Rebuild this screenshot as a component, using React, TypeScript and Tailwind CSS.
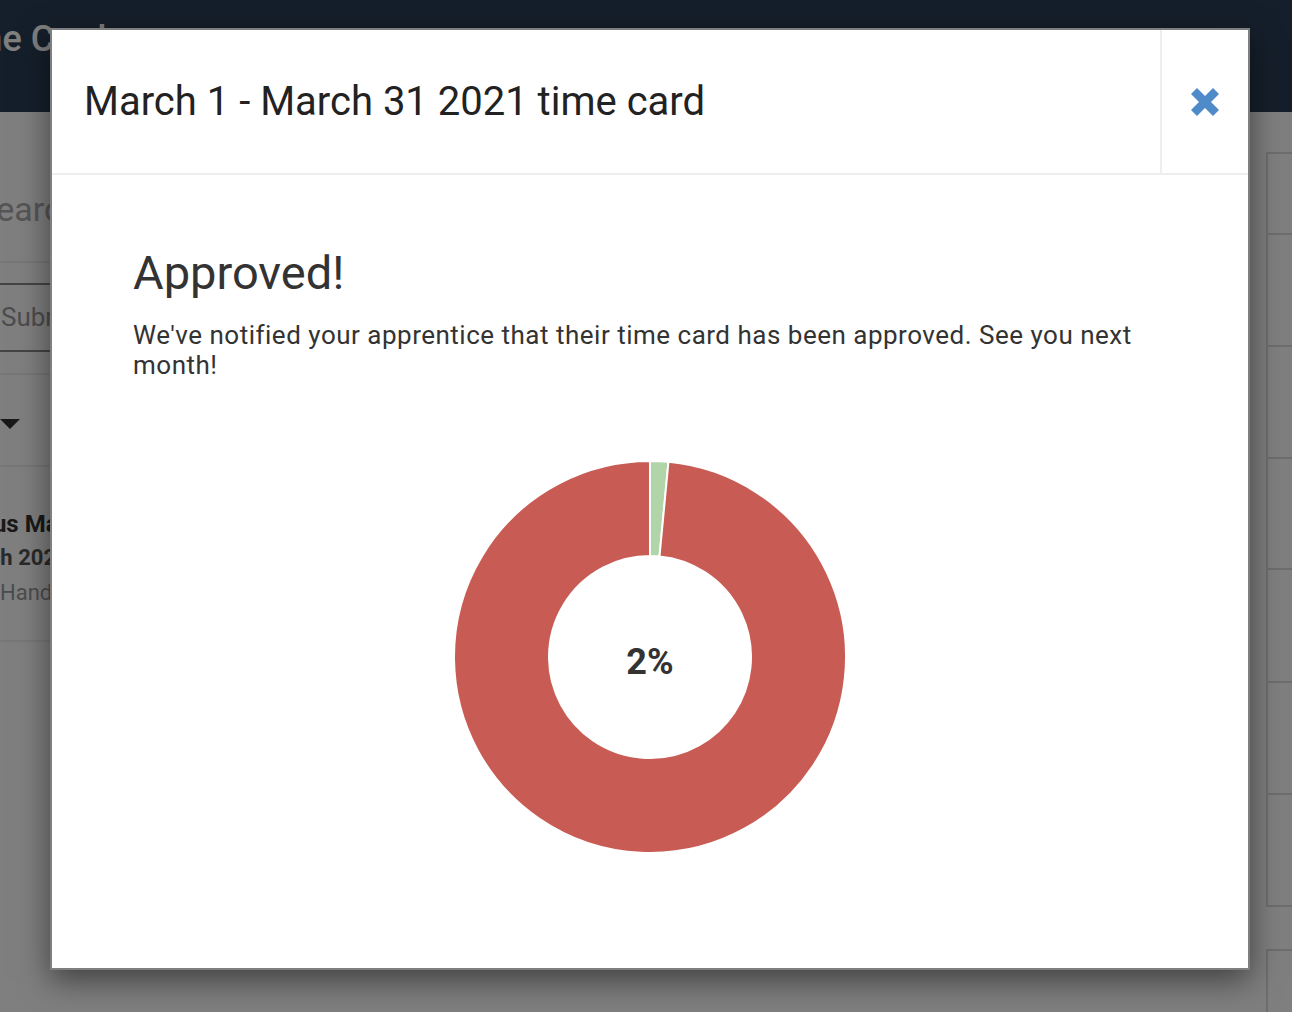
import React from 'react';

const font = { fontFamily: 'Roboto, "Noto Sans", sans-serif' };

function arcPath(cx: number, cy: number, rO: number, rI: number, a0: number, a1: number) {
  const pt = (r: number, a: number) => {
    const rad = ((a - 90) * Math.PI) / 180;
    return `${cx + r * Math.cos(rad)} ${cy + r * Math.sin(rad)}`;
  };
  const large = a1 - a0 > 180 ? 1 : 0;
  return `M ${pt(rO, a0)} A ${rO} ${rO} 0 ${large} 1 ${pt(rO, a1)} L ${pt(rI, a1)} A ${rI} ${rI} 0 ${large} 0 ${pt(rI, a0)} Z`;
}

function Donut({ percent }: { percent: number }) {
  const split = (percent / 100) * 360;
  return (
    <div className="relative w-[394px] h-[394px]">
      <svg width="394" height="394" viewBox="0 0 394 394">
        <path d={arcPath(197, 197, 196, 101, 0, split)} fill="#b1d4a8" stroke="#fff" strokeWidth="2" />
        <path d={arcPath(197, 197, 196, 101, split, 359.99)} fill="#c85b53" stroke="#fff" strokeWidth="2" />
      </svg>
      <div className="absolute inset-0 flex items-center justify-center pt-[10px]">
        <span className="text-[36px] font-bold text-[#333]">2%</span>
      </div>
    </div>
  );
}

function BackgroundPage() {
  const rows = [81, 112, 112, 111, 113, 112, 112];
  return (
    <div className="w-full h-full flex flex-col bg-white" style={font}>
      <div className="h-[112px] shrink-0 bg-[#2a3e56] flex items-start overflow-hidden">
        <span className="-ml-[60px] mt-[12px] text-[36px] font-medium text-white whitespace-nowrap">Time Cards</span>
      </div>
      <div className="flex flex-1 min-h-0">
        <div className="w-[300px] flex flex-col">
          <div className="h-[151px] shrink-0 border-b-2 border-[#eee] flex items-start pt-[72px] overflow-hidden">
            <span className="-ml-[24px] text-[34px] text-[#aaa] whitespace-nowrap">Search</span>
          </div>
          <div className="h-[112px] shrink-0 border-b-2 border-[#eee] flex flex-col pt-[20px]">
            <div className="h-[69px] border-y-2 border-[#888] flex items-center">
              <span className="text-[26px] text-[#999] pl-[1px]">Submitted</span>
            </div>
          </div>
          <div className="h-[92px] shrink-0 border-b-2 border-[#eee] flex items-center pt-[8px]">
            <div className="w-0 h-0 border-l-[10px] border-r-[10px] border-t-[10px] border-l-transparent border-r-transparent border-t-[#333]"></div>
          </div>
          <div className="h-[175px] shrink-0 border-b-2 border-[#eee] flex flex-col pt-[40px] overflow-hidden">
            <span className="-ml-[62px] text-[24px] font-bold text-[#333] leading-[34px] whitespace-nowrap">Marcus Martin</span>
            <span className="-ml-[50px] text-[22px] font-bold text-[#555] leading-[34px] whitespace-nowrap">March 2021</span>
            <span className="text-[22px] text-[#999] leading-[36px] whitespace-nowrap">Handyman</span>
          </div>
        </div>
        <div className="flex-1"></div>
        <div className="w-[26px] flex flex-col pt-[40px]">
          <div className="border-l-2 border-t-2 border-[#ddd] flex flex-col">
            {rows.map((h, i) => (
              <div key={i} className="border-b-2 border-[#ddd]" style={{ height: h }}></div>
            ))}
          </div>
          <div className="mt-[42px] border-l-2 border-t-2 border-[#ddd] h-[80px]"></div>
        </div>
      </div>
    </div>
  );
}

export default function App() {
  return (
    <div className="relative w-[1292px] h-[1012px] overflow-hidden" style={font}>
      <BackgroundPage />
      <div className="absolute inset-0 bg-black/50">
        <div className="absolute left-[50px] top-[28px] w-[1200px] h-[942px] bg-white border-2 border-black/50 shadow-[0_10px_30px_rgba(0,0,0,0.5)] flex flex-col">
          <div className="flex h-[145px] border-b-2 border-[#eee]">
            <div className="flex-1 flex items-center pl-[32px]">
              <h1 className="text-[40px] text-[#222] leading-none">March 1 - March 31 2021 time card</h1>
            </div>
            <div className="w-[88px] border-l-2 border-[#eee] flex items-center justify-center">
              <svg width="30" height="30" viewBox="0 0 30 30">
                <line x1="4" y1="4" x2="26" y2="26" stroke="#4f8ac9" strokeWidth="8.5" />
                <line x1="26" y1="4" x2="4" y2="26" stroke="#4f8ac9" strokeWidth="8.5" />
              </svg>
            </div>
          </div>
          <div className="flex-1 px-[81px] pt-[74px] flex flex-col">
            <h2 className="text-[47px] text-[#333] leading-none">Approved!</h2>
            <p className="mt-[24px] max-w-[1020px] text-[26px] tracking-[0.5px] leading-[30px] text-[#333]">
              We've notified your apprentice that their time card has been approved. See you next month!
            </p>
            <div className="mt-[80px] flex justify-center">
              <Donut percent={1.5} />
            </div>
          </div>
        </div>
      </div>
    </div>
  );
}
